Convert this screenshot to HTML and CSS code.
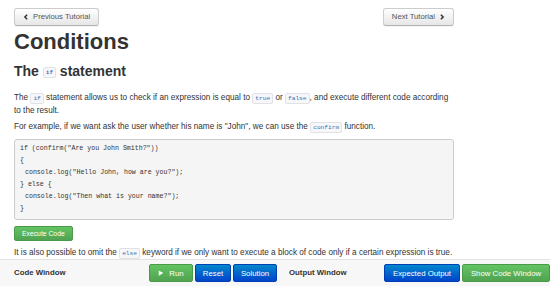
FILE: index.html
```html
<!DOCTYPE html>
<html lang="en">
<head>
    <meta charset="UTF-8">
    <meta name="viewport" content="width=device-width, initial-scale=1.0">
    <title>Conditions</title>
    <link rel="stylesheet" href="styles.css">
</head>
<body>
    <div class="container">
        <div class="nav">
            <a class="btn" href="#">
                <svg class="chev" viewBox="0 0 8 8"><path d="M5.5 1 L2.5 4 L5.5 7" /></svg>
                Previous Tutorial
            </a>
            <a class="btn" href="#">
                Next Tutorial
                <svg class="chev" viewBox="0 0 8 8"><path d="M2.5 1 L5.5 4 L2.5 7" /></svg>
            </a>
        </div>
        <h1>Conditions</h1>
        <h2>The <code>if</code> statement</h2>
        <p>The <code>if</code> statement allows us to check if an expression is equal to <code>true</code> or <code>false</code>, and execute different code according to the result.</p>
        <p>For example, if we want ask the user whether his name is "John", we can use the <code>confirm</code> function.</p>
<pre>if (confirm("Are you John Smith?"))
{
	console.log("Hello John, how are you?");
} else {
	console.log("Then what is your name?");
}</pre>
        <button class="btn-run-code">Execute Code</button>
        <p>It is also possible to omit the <code>else</code> keyword if we only want to execute a block of code only if a certain expression is true.</p>
    </div>

    <div class="bottom-bar">
        <div class="pane pane-left">
            <span class="pane-title">Code Window</span>
            <div class="pane-buttons">
                <button class="bbtn green run-btn">
                    <svg class="play" viewBox="0 0 8 8"><path d="M1 0.5 L7 4 L1 7.5 Z" /></svg>
                    Run
                </button>
                <button class="bbtn blue reset-btn">Reset</button>
                <button class="bbtn blue solution-btn">Solution</button>
            </div>
        </div>
        <div class="pane pane-right">
            <span class="pane-title">Output Window</span>
            <div class="pane-buttons">
                <button class="bbtn blue expected-btn">Expected Output</button>
                <button class="bbtn green show-btn">Show Code Window</button>
            </div>
        </div>
    </div>
</body>
</html>
```

FILE: styles.css
```css
body {
    margin: 0;
    font-family: "Liberation Sans", Arial, sans-serif;
    font-size: 8.2px;
    line-height: 11.5px;
    color: #333333;
    background: #ffffff;
}

.container {
    width: 440px;
    padding: 8px 14px 0 14px;
}

.nav {
    display: flex;
    justify-content: space-between;
}

.btn {
    display: flex;
    align-items: center;
    gap: 4px;
    height: 16px;
    padding: 0 8px;
    font-size: 7.7px;
    color: #555555;
    text-decoration: none;
    background: linear-gradient(#ffffff, #e6e6e6);
    border: 1px solid #cccccc;
    border-bottom-color: #b3b3b3;
    border-radius: 3px;
    box-shadow: inset 0 1px 0 rgba(255, 255, 255, 0.2), 0 1px 1px rgba(0, 0, 0, 0.05);
}

.chev {
    width: 6px;
    height: 6px;
}

.chev path {
    fill: none;
    stroke: #333333;
    stroke-width: 2;
}

h1 {
    margin: 3px 0 0 0;
    font-size: 22px;
    line-height: 26px;
    font-weight: bold;
    color: #333333;
}

h2 {
    margin: 7px 0 10px 0;
    font-size: 14px;
    line-height: 18px;
    font-weight: bold;
    color: #333333;
}

code {
    font-family: "Liberation Mono", monospace;
    font-size: 6.2px;
    padding: 1px 2px;
    color: #3b74b0;
    background: #f7f7f9;
    border: 1px solid #e1e1e8;
    border-radius: 2px;
}

h2 code {
    font-size: 6px;
    vertical-align: 2px;
}

p {
    margin: 0 0 5px 0;
}

pre {
    margin: 4px 0 6px 0;
    padding: 3px 5px 4px 5px;
    font-family: "Liberation Mono", monospace;
    font-size: 6.6px;
    line-height: 12px;
    tab-size: 5px;
    color: #333333;
    background: #f5f5f5;
    border: 1px solid #cccccc;
    border-radius: 3px;
}

.btn-run-code {
    display: block;
    height: 15px;
    padding: 0 7px;
    margin: 0 0 6px 0;
    font-family: "Liberation Sans", Arial, sans-serif;
    font-size: 6.8px;
    color: #ffffff;
    background: linear-gradient(#62c462, #51a351);
    border: 1px solid #4b9a4b;
    border-radius: 2px;
}

.bottom-bar {
    position: fixed;
    left: 0;
    right: 0;
    bottom: 0;
    height: 26px;
    display: flex;
    background: #f7f7f7;
    border-top: 1px solid #e3e3e3;
}

.pane {
    display: flex;
    align-items: center;
}

.pane-left {
    width: 277px;
    padding-left: 14px;
    box-sizing: border-box;
}

.pane-right {
    flex: 1;
    padding-left: 12px;
}

.pane-title {
    font-size: 7.8px;
    font-weight: bold;
    color: #333333;
}

.pane-buttons {
    margin-left: auto;
    display: flex;
    gap: 2px;
}

.bbtn {
    height: 18px;
    padding: 0;
    font-family: "Liberation Sans", Arial, sans-serif;
    font-size: 7.8px;
    color: #ffffff;
    border-radius: 2px;
    display: flex;
    align-items: center;
    justify-content: center;
    gap: 5px;
}

.green {
    background: linear-gradient(#62c462, #51a351);
    border: 1px solid #4a9a4a;
}

.blue {
    background: linear-gradient(#0088cc, #0044cc);
    border: 1px solid #0040b0;
}

.run-btn { width: 44px; }
.reset-btn { width: 36px; }
.solution-btn { width: 44px; }
.expected-btn { width: 76px; }
.show-btn { width: 88px; }

.play {
    width: 6px;
    height: 6px;
}

.play path {
    fill: #ffffff;
}
```
